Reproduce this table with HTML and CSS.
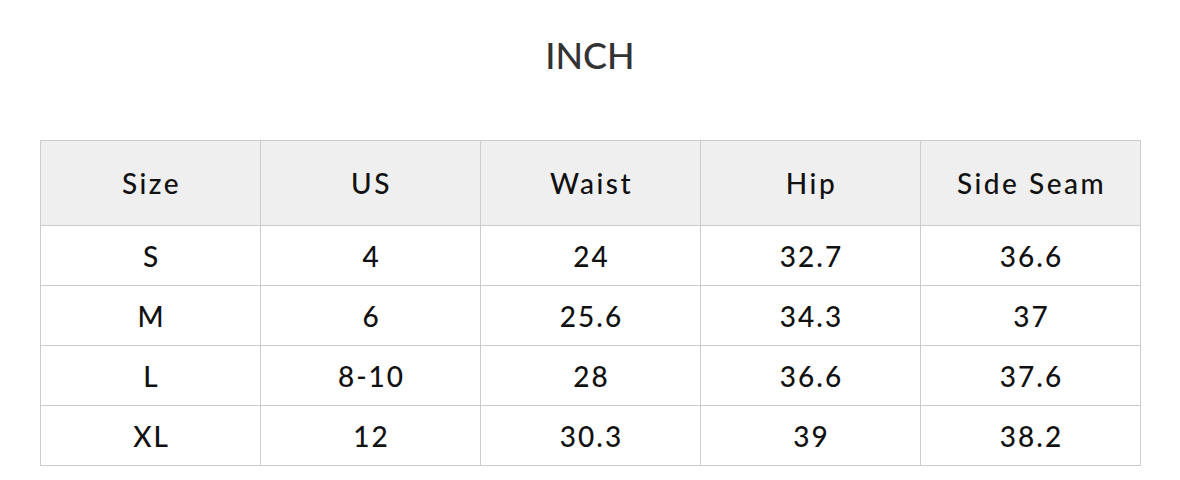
FILE: index.html
```html
<!DOCTYPE html>
<html>
<head>
<meta charset="utf-8">
<link rel="stylesheet" href="styles.css">
</head>
<body>
<div class="page">
  <h1 class="title">INCH</h1>
  <table class="size-table">
    <thead>
      <tr><th>Size</th><th>US</th><th>Waist</th><th>Hip</th><th>Side Seam</th></tr>
    </thead>
    <tbody>
      <tr><td>S</td><td>4</td><td>24</td><td>32.7</td><td>36.6</td></tr>
      <tr><td>M</td><td>6</td><td>25.6</td><td>34.3</td><td>37</td></tr>
      <tr><td>L</td><td>8-10</td><td>28</td><td>36.6</td><td>37.6</td></tr>
      <tr><td>XL</td><td>12</td><td>30.3</td><td>39</td><td>38.2</td></tr>
    </tbody>
  </table>
</div>
</body>
</html>
```
FILE: styles.css
```css
html, body {
  margin: 0;
  padding: 0;
  background: #ffffff;
}
.page {
  padding: 30px 40px 0 40px;
  font-family: Lato, "Open Sans", sans-serif;
}
.title {
  margin: 0;
  height: 50px;
  line-height: 50px;
  text-align: center;
  font-size: 36px;
  font-weight: 500;
  color: #333333;
}
.size-table {
  margin-top: 60px;
  border-collapse: collapse;
  table-layout: fixed;
  width: 1101px;
}
.size-table th,
.size-table td {
  border: 1px solid #cccccc;
  text-align: center;
  vertical-align: middle;
  padding: 0 0 0 2px;
  color: #111111;
  font-size: 28px;
  font-weight: 500;
  letter-spacing: 2px;
}
.size-table th {
  height: 84px;
  background: #efefef;
  letter-spacing: 2.5px;
}
.size-table td {
  height: 59px;
}
```
